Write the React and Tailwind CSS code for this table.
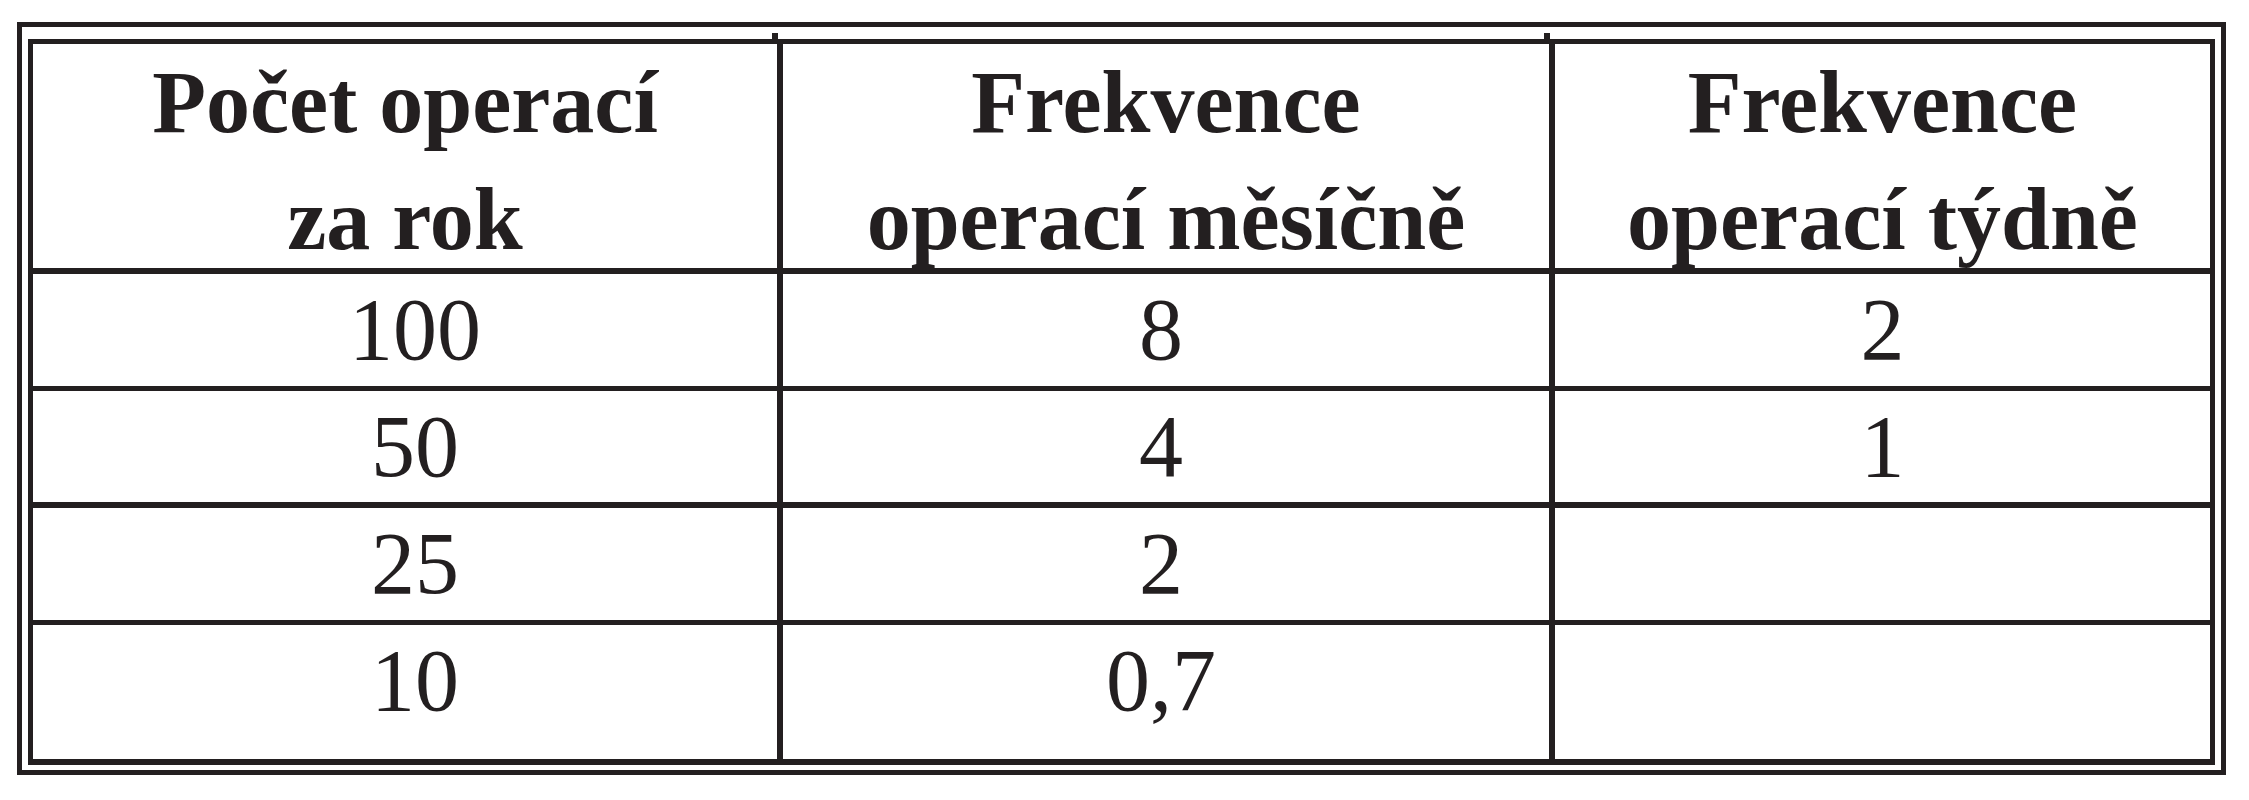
export default function App() {
  const rows = [
    ['100', '8', '2'],
    ['50', '4', '1'],
    ['25', '2', ''],
    ['10', '0,7', ''],
  ];
  const lineB = ['border-b-[6px]', 'border-b-[5px]', 'border-b-[6px]', 'border-b-[5px]'];
  const shift = ['pl-[20px]', 'pr-[10px]', ''];

  return (
    <div
      className="min-h-screen w-[2249px] bg-white pt-[22px] pl-[17px] text-[#231f20]"
      style={{ fontFamily: '"Liberation Serif", "Times New Roman", serif' }}
    >
      {/* outer frame */}
      <div className="w-[2209px] border-[5px] border-[#231f20] pt-[12px] pb-[5px] px-[6px]">
        {/* inner frame */}
        <div className="relative border-[5px] border-b-[6px] border-[#231f20]">
          {/* divider ticks poking above the inner frame */}
          <span className="absolute left-[739px] -top-[11px] h-[6px] w-[6px] bg-[#231f20]" />
          <span className="absolute left-[1511px] -top-[11px] h-[6px] w-[6px] bg-[#231f20]" />

          {/* header */}
          <div className="grid grid-cols-[750px_772px_655px] border-b-[6px] border-[#231f20] h-[230px] text-[88px] font-bold leading-[117px] text-center">
            <div className="flex items-center justify-center border-r-[6px] border-[#231f20]">
              <span>Počet operací<br />za rok</span>
            </div>
            <div className="flex items-center justify-center border-r-[6px] border-[#231f20]">
              <span>Frekvence<br />operací měsíčně</span>
            </div>
            <div className="flex items-center justify-center">
              <span>Frekvence<br />operací týdně</span>
            </div>
          </div>

          {/* body */}
          {rows.map((r, i) => (
            <div
              key={i}
              className={
                'grid grid-cols-[750px_772px_655px] border-[#231f20] text-[88px] ' +
                (i < 3 ? lineB[i + 1] + ' h-[117px]' : 'h-[134px]')
              }
            >
              {r.map((v, j) => (
                <div
                  key={j}
                  className={
                    'flex h-full items-start justify-center ' +
                    shift[j] +
                    (j < 2 ? ' border-r-[6px] border-[#231f20]' : '')
                  }
                >
                  <div className="flex h-[112px] items-center leading-none">{v}</div>
                </div>
              ))}
            </div>
          ))}
        </div>
      </div>
    </div>
  );
}
